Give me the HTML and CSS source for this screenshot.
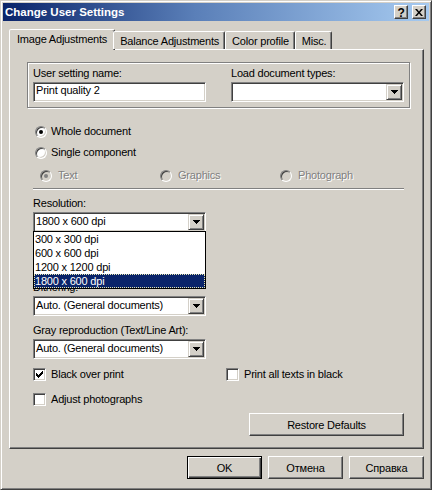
FILE: index.html
```html
<!DOCTYPE html>
<html>
<head>
<meta charset="utf-8">
<title>Change User Settings</title>
<link rel="stylesheet" href="styles.css">
</head>
<body>
<div class="window">
  <div class="titlebar">
    <span class="title">Change User Settings</span>
    <span class="capbtn capbtn-help">?</span>
    <span class="capbtn capbtn-close"><svg width="8" height="7" viewBox="0 0 8 7"><path d="M0 0h2l2 2.4 2-2.4h2l-3 3.5 3 3.5h-2l-2-2.4-2 2.4h-2l3-3.5z"/></svg></span>
  </div>
  <div class="client">
    <div class="tabs">
      <div class="tab active">Image Adjustments</div>
      <div class="tab">Balance Adjustments</div>
      <div class="tab">Color profile</div>
      <div class="tab">Misc.</div>
    </div>
    <div class="panel">
      <div class="group">
        <div class="field">
          <div class="label">User setting name:</div>
          <div class="textbox">Print quality 2</div>
        </div>
        <div class="field">
          <div class="label">Load document types:</div>
          <div class="combo">
            <span class="combo-text"></span>
            <span class="combo-btn"><svg width="7" height="4" viewBox="0 0 7 4"><path d="M0 0h7v1h-1v1h-1v1h-1v1h-1v-1h-1v-1h-1v-1h-1z"/></svg></span>
          </div>
        </div>
      </div>

      <div class="options">
        <div class="radio-row"><span class="radio checked"></span><span>Whole document</span></div>
        <div class="radio-row"><span class="radio"></span><span>Single component</span></div>
        <div class="subradios">
          <div class="radio-item disabled"><span class="radio checked"></span><span>Text</span></div>
          <div class="radio-item disabled"><span class="radio"></span><span>Graphics</span></div>
          <div class="radio-item disabled"><span class="radio"></span><span>Photograph</span></div>
        </div>
        <div class="separator"></div>

        <div class="field field-resolution">
          <div class="label">Resolution:</div>
          <div class="combo">
            <span class="combo-text">1800 x 600 dpi</span>
            <span class="combo-btn"><svg width="7" height="4" viewBox="0 0 7 4"><path d="M0 0h7v1h-1v1h-1v1h-1v1h-1v-1h-1v-1h-1v-1h-1z"/></svg></span>
          </div>
          <div class="listbox">
            <div class="list-item">300 x 300 dpi</div>
            <div class="list-item">600 x 600 dpi</div>
            <div class="list-item">1200 x 1200 dpi</div>
            <div class="list-item selected">1800 x 600 dpi</div>
          </div>
        </div>

        <div class="field field-dithering">
          <div class="label">Dithering:</div>
          <div class="combo">
            <span class="combo-text">Auto. (General documents)</span>
            <span class="combo-btn"><svg width="7" height="4" viewBox="0 0 7 4"><path d="M0 0h7v1h-1v1h-1v1h-1v1h-1v-1h-1v-1h-1v-1h-1z"/></svg></span>
          </div>
        </div>

        <div class="field field-gray">
          <div class="label">Gray reproduction (Text/Line Art):</div>
          <div class="combo">
            <span class="combo-text">Auto. (General documents)</span>
            <span class="combo-btn"><svg width="7" height="4" viewBox="0 0 7 4"><path d="M0 0h7v1h-1v1h-1v1h-1v1h-1v-1h-1v-1h-1v-1h-1z"/></svg></span>
          </div>
        </div>

        <div class="checks">
          <div class="check-item"><span class="checkbox"><svg width="7" height="7" viewBox="0 0 7 7"><path d="M0 2H1V3H2V4H3V3H4V2H5V1H6V0H7V3H6V4H5V5H4V6H3V7H2V6H1V5H0Z"/></svg></span><span>Black over print</span></div>
          <div class="check-item"><span class="checkbox"></span><span>Print all texts in black</span></div>
          <div class="check-item"><span class="checkbox"></span><span>Adjust photographs</span></div>
        </div>

        <div class="restore-row">
          <button class="btn btn-restore">Restore Defaults</button>
        </div>
      </div>
    </div>

    <div class="buttons">
      <button class="btn btn-default">OK</button>
      <button class="btn">Отмена</button>
      <button class="btn">Справка</button>
    </div>
  </div>
</div>
</body>
</html>
```

FILE: styles.css
```css
* {
  box-sizing: border-box;
}

html, body {
  margin: 0;
  padding: 0;
}

body {
  font-family: "Liberation Sans", Arial, sans-serif;
  font-size: 11px;
  line-height: 13px;
  letter-spacing: -0.2px;
  color: #000;
  background: #d4d0c8;
}

.window {
  width: 432px;
  height: 490px;
  background: #d4d0c8;
  border: 1px solid;
  border-color: #d4d0c8 #404040 #404040 #d4d0c8;
  box-shadow: inset 1px 1px #fff, inset -1px -1px #808080;
  padding: 2px;
  display: flex;
  flex-direction: column;
}

/* ---------- title bar ---------- */
.titlebar {
  height: 18px;
  display: flex;
  align-items: center;
  padding: 0 3px 0 2px;
  background: linear-gradient(to right, #0a246a 0%, #5a7fb8 45%, #a6caf0 100%);
}

.title {
  flex: 1;
  color: #fff;
  font-weight: bold;
  font-size: 11.5px;
  letter-spacing: 0;
  white-space: nowrap;
}

.capbtn {
  width: 14px;
  height: 14px;
  background: #d4d0c8;
  border: 1px solid;
  border-color: #fff #404040 #404040 #fff;
  box-shadow: inset -1px -1px #808080;
  display: flex;
  align-items: center;
  justify-content: center;
  font-weight: bold;
  font-size: 12px;
  line-height: 12px;
  color: #000;
}

.capbtn + .capbtn {
  margin-left: 4px;
}

.capbtn-help {
  padding-top: 1px;
}

/* ---------- client ---------- */
.client {
  flex: 1;
  display: flex;
  flex-direction: column;
  padding: 8px 5px 0 6px;
}

.tabs {
  height: 20px;
  display: flex;
  align-items: flex-end;
  padding-left: 2px;
  position: relative;
  z-index: 1;
}

.tab {
  height: 18px;
  padding: 3px 5px 0 6px;
  background: #d4d0c8;
  border: 1px solid;
  border-bottom: none;
  border-color: #fff #404040 transparent #fff;
  border-radius: 2px 2px 0 0;
  box-shadow: inset -1px 0 #808080;
  white-space: nowrap;
}

.tab.active {
  height: 21px;
  margin: 0 -2px -1px -2px;
  padding: 3px 7px 0 7px;
}

.panel {
  height: 400px;
  border: 1px solid;
  border-color: #fff #404040 #404040 #fff;
  box-shadow: inset -1px -1px #808080;
  padding: 12px 0 0 17px;
}

/* ---------- group box ---------- */
.group {
  width: 383px;
  border: 1px solid #808080;
  box-shadow: inset 1px 1px #fff, 1px 1px #fff;
  padding: 4px 5px 5px 5px;
  display: grid;
  grid-template-columns: 173px 173px;
  column-gap: 25px;
}

.label {
  height: 13px;
  margin-bottom: 2px;
  white-space: nowrap;
}

.textbox {
  height: 20px;
  background: #fff;
  border: 1px solid;
  border-color: #808080 #fff #fff #808080;
  box-shadow: inset 1px 1px #404040, inset -1px -1px #d4d0c8;
  padding: 1px 2px 0 2px;
  white-space: nowrap;
}

.combo {
  height: 20px;
  width: 173px;
  background: #fff;
  border: 1px solid;
  border-color: #808080 #fff #fff #808080;
  box-shadow: inset 1px 1px #404040, inset -1px -1px #d4d0c8;
  padding: 1px;
  display: flex;
}

.combo-text {
  flex: 1;
  padding: 1px 1px 0 1px;
  white-space: nowrap;
  overflow: hidden;
}

.combo-btn {
  width: 16px;
  height: 16px;
  background: #d4d0c8;
  border: 1px solid;
  border-color: #d4d0c8 #404040 #404040 #d4d0c8;
  box-shadow: inset 1px 1px #fff, inset -1px -1px #808080;
  display: flex;
  align-items: center;
  justify-content: center;
}

.combo-btn svg {
  display: block;
  shape-rendering: crispEdges;
  fill: #000;
}

/* ---------- options ---------- */
.options {
  width: 371px;
  margin-left: 6px;
  display: flex;
  flex-direction: column;
}

.radio-row {
  height: 21px;
  display: flex;
  align-items: center;
  gap: 4px;
  padding-left: 2px;
  white-space: nowrap;
}

.radio-row:first-child {
  margin-top: 13px;
}

.radio {
  position: relative;
  flex: none;
  width: 12px;
  height: 12px;
  border-radius: 50%;
  background: #fff;
  border: 1px solid;
  border-color: #808080 #fff #fff #808080;
  box-shadow: inset 1px 1px #404040, inset -1px -1px #d4d0c8;
}

.radio.checked::after {
  content: "";
  position: absolute;
  left: 3px;
  top: 3px;
  width: 4px;
  height: 4px;
  border-radius: 50%;
  background: #000;
}

.subradios {
  height: 21px;
  margin-top: 2px;
  padding-left: 7px;
  display: grid;
  grid-template-columns: 120px 120px 120px;
}

.radio-item {
  display: flex;
  align-items: center;
  gap: 6px;
  white-space: nowrap;
}

.radio-item.disabled {
  color: #808080;
  text-shadow: 1px 1px 0 #fff;
}

.radio-item.disabled .radio {
  background: #d4d0c8;
}

.radio-item.disabled .radio.checked::after {
  background: #808080;
}

.separator {
  margin-top: 2px;
  height: 2px;
  border-top: 1px solid #808080;
  border-bottom: 1px solid #fff;
}

.field-resolution {
  margin-top: 7px;
  position: relative;
}

.field-dithering {
  margin-top: 49px;
}

.field-gray {
  margin-top: 8px;
}

.listbox {
  position: absolute;
  z-index: 2;
  left: 0;
  top: 34px;
  width: 173px;
  background: #fff;
  border: 1px solid #000;
}

.list-item {
  height: 14px;
  line-height: 14px;
  padding-left: 1px;
  white-space: nowrap;
}

.list-item.selected {
  background: #0a246a;
  color: #fff;
  outline: 1px dotted #e8e8b0;
  outline-offset: -1px;
}

/* ---------- checkboxes ---------- */
.checks {
  margin-top: 7px;
  display: grid;
  grid-template-columns: 193px 178px;
  grid-auto-rows: 17px;
  row-gap: 8px;
}

.check-item {
  display: flex;
  align-items: center;
  gap: 5px;
  white-space: nowrap;
}

.checkbox {
  flex: none;
  width: 13px;
  height: 13px;
  background: #fff;
  border: 1px solid;
  border-color: #808080 #fff #fff #808080;
  box-shadow: inset 1px 1px #404040, inset -1px -1px #d4d0c8;
  padding: 2px;
}

.checkbox svg {
  display: block;
  fill: #000;
  shape-rendering: crispEdges;
}

/* ---------- buttons ---------- */
.btn {
  font-family: "Liberation Sans", Arial, sans-serif;
  font-size: 11px;
  letter-spacing: -0.2px;
  color: #000;
  height: 23px;
  width: 75px;
  padding: 0;
  margin: 0;
  background: #d4d0c8;
  border: 1px solid;
  border-color: #fff #404040 #404040 #fff;
  box-shadow: inset -1px -1px #808080;
}

.btn-default {
  border-color: #000;
  box-shadow: inset 1px 1px #fff, inset -1px -1px #404040, inset -2px -2px #808080;
}

.restore-row {
  margin-top: 5px;
  display: flex;
  justify-content: flex-end;
}

.btn-restore {
  width: 155px;
}

.buttons {
  margin-top: 7px;
  display: flex;
  justify-content: flex-end;
  gap: 6px;
}
```
